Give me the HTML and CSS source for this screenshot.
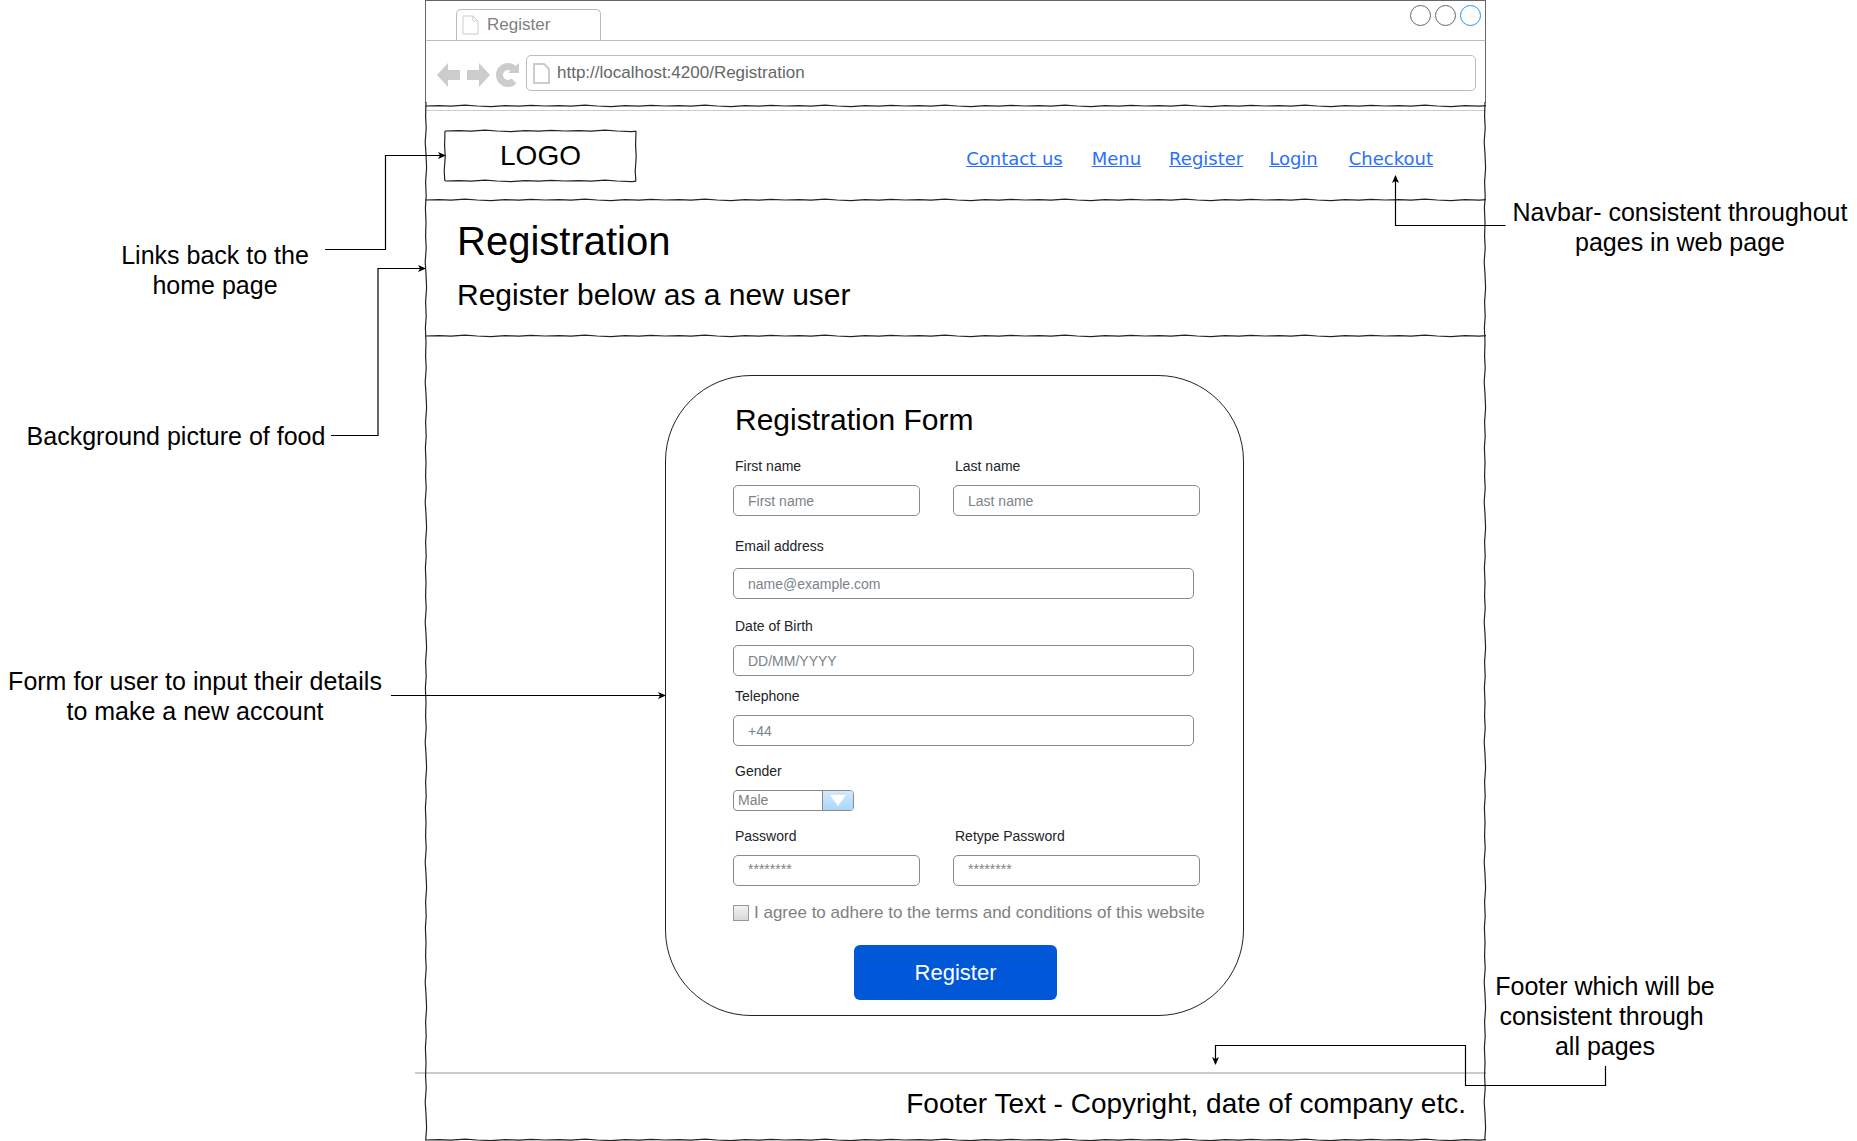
FILE: index.html
```html
<!DOCTYPE html>
<html lang="en">
<head>
    <meta charset="UTF-8">
    <meta name="viewport" content="width=device-width, initial-scale=1.0">
    <title>Registration wireframe</title>
    <link rel="stylesheet" href="styles.css">
</head>
<body>
    <svg class="defs" width="0" height="0">
        <defs>
            <path id="wobble" d="M0 3 L14 2.6 L26 3.2 L40 2.2 L52 3 L66 3.6 L80 2.6 L94 3.2 L106 2.4 L120 3"/>
            <path id="wobble-v" d="M3 0 L2.6 14 L3.2 26 L2.2 40 L3 52 L3.6 66 L2.6 80 L3.2 94 L2.4 106 L3 120"/>
            <pattern id="sketch-h" width="120" height="6" patternUnits="userSpaceOnUse">
                <use href="#wobble" fill="none" stroke="#222" stroke-width="1.2"/>
            </pattern>
            <pattern id="sketch-v" width="6" height="120" patternUnits="userSpaceOnUse">
                <use href="#wobble-v" fill="none" stroke="#222" stroke-width="1.2"/>
            </pattern>
            <marker id="arrow" markerWidth="8" markerHeight="8" refX="7" refY="4" orient="auto" markerUnits="userSpaceOnUse">
                <path d="M0 0.5 L8 4 L0 7.5 L2 4 Z" fill="#000"/>
            </marker>
        </defs>
    </svg>

    <div class="window">
        <!-- browser chrome -->
        <div class="tabbar">
            <div class="tab">
                <svg class="page-icon" width="17" height="20" viewBox="0 0 17 20">
                    <path d="M1 1 H11 L16 6 V19 H1 Z M11 1 V6 H16" fill="none" stroke="#ccc" stroke-width="1"/>
                </svg>
                <span>Register</span>
            </div>
            <div class="controls">
                <span class="dot"></span>
                <span class="dot"></span>
                <span class="dot dot-blue"></span>
            </div>
        </div>
        <div class="addressbar">
            <svg class="nav-icons" width="84" height="26" viewBox="0 0 84 26">
                <path d="M0 13 L11 1 V8 H23 V18 H11 V25 Z" fill="#ccc"/>
                <path d="M53 13 L42 1 V8 H30 V18 H42 V25 Z" fill="#ccc"/>
                <path d="M77 7 A8.5 8.5 0 1 0 77 19" fill="none" stroke="#ccc" stroke-width="7"/>
                <path d="M71 11 L82 11 L82 1 Z" fill="#ccc"/>
            </svg>
            <div class="url">
                <svg class="page-icon" width="17" height="21" viewBox="0 0 17 21">
                    <path d="M1 1 H11 L16 6 V20 H1 Z" fill="none" stroke="#ccc" stroke-width="2"/>
                </svg>
                <span>http://localhost:4200/Registration</span>
            </div>
        </div>

        <svg class="sketch-line" height="6"><rect width="100%" height="6" fill="url(#sketch-h)"/></svg>
        <div class="grey-rule"></div>

        <!-- navbar -->
        <nav class="navbar">
            <div class="logo">
                LOGO
                <svg class="logo-frame" width="191" height="50">
                    <g transform="translate(0 -3)"><rect width="191" height="6" fill="url(#sketch-h)"/></g>
                    <g transform="translate(0 47)"><rect width="191" height="6" fill="url(#sketch-h)"/></g>
                    <g transform="translate(-3 0)"><rect width="6" height="50" fill="url(#sketch-v)"/></g>
                    <g transform="translate(188 0)"><rect width="6" height="50" fill="url(#sketch-v)"/></g>
                </svg>
            </div>
            <ul class="nav-links">
                <li class="link-contact"><a href="#">Contact us</a></li>
                <li class="link-menu"><a href="#">Menu</a></li>
                <li class="link-register"><a href="#">Register</a></li>
                <li class="link-login"><a href="#">Login</a></li>
                <li class="link-checkout"><a href="#">Checkout</a></li>
            </ul>
        </nav>
        <svg class="sketch-line" height="6"><rect width="100%" height="6" fill="url(#sketch-h)"/></svg>

        <header class="page-head">
            <h1>Registration</h1>
            <p>Register below as a new user</p>
        </header>
        <svg class="sketch-line" height="6"><rect width="100%" height="6" fill="url(#sketch-h)"/></svg>

        <!-- form -->
        <main class="content">
            <form class="card">
                <h2>Registration Form</h2>
                <div class="row row-first">
                    <div class="field field-short">
                        <label>First name</label>
                        <input type="text" placeholder="First name">
                    </div>
                    <div class="field field-long">
                        <label>Last name</label>
                        <input type="text" placeholder="Last name">
                    </div>
                </div>
                <div class="field field-full field-email">
                    <label>Email address</label>
                    <input type="text" placeholder="name@example.com">
                </div>
                <div class="field field-full field-dob">
                    <label>Date of Birth</label>
                    <input type="text" placeholder="DD/MM/YYYY">
                </div>
                <div class="field field-full field-tel">
                    <label>Telephone</label>
                    <input type="text" placeholder="+44">
                </div>
                <div class="field field-gender">
                    <label>Gender</label>
                    <div class="select">
                        <span class="select-value">Male</span>
                        <span class="select-btn"><i class="caret"></i></span>
                    </div>
                </div>
                <div class="row row-pass">
                    <div class="field field-short">
                        <label>Password</label>
                        <input class="stars" type="text" placeholder="********">
                    </div>
                    <div class="field field-long">
                        <label>Retype Password</label>
                        <input class="stars" type="text" placeholder="********">
                    </div>
                </div>
                <div class="agree">
                    <span class="checkbox"></span>
                    <span>I agree to adhere to the terms and conditions of this website</span>
                </div>
                <button class="submit" type="button">Register</button>
            </form>
        </main>

        <footer class="footer">Footer Text - Copyright, date of company etc.</footer>
    </div>

    <!-- window sides and annotation connectors -->
    <svg class="overlay" width="1857" height="1141">
        <g transform="translate(423 102)">
            <rect width="6" height="1038" fill="url(#sketch-v)"/>
        </g>
        <g transform="translate(1482 102)">
            <rect width="6" height="1038" fill="url(#sketch-v)"/>
        </g>
        <g transform="translate(425 1137)">
            <rect width="1061" height="4" fill="url(#sketch-h)"/>
        </g>
        <g fill="none" stroke="#000" stroke-width="1.2">
            <path d="M325 249.5 H385.5 V155.5 H445" marker-end="url(#arrow)"/>
            <path d="M331 435.5 H378 V268.5 H425" marker-end="url(#arrow)"/>
            <path d="M391 695.5 H665" marker-end="url(#arrow)"/>
            <path d="M1505.5 225.5 H1395.5 V176" marker-end="url(#arrow)"/>
            <path d="M1605.5 1066 V1085.5 H1465.5 V1045.5 H1215.5 V1064" marker-end="url(#arrow)"/>
        </g>
    </svg>

    <div class="note note-links">Links back to the<br>home page</div>
    <div class="note note-bg">Background picture of food</div>
    <div class="note note-form">Form for user to input their details<br>to make a new account</div>
    <div class="note note-nav">Navbar- consistent throughout<br>pages in web page</div>
    <div class="note note-footer">Footer which will be<br>consistent through&nbsp;<br>all pages</div>
</body>
</html>
```

FILE: styles.css
```css
/* page */
html, body {
    margin: 0;
    padding: 0;
    background: #fff;
    overflow: hidden;
}

body {
    position: relative;
    width: 1857px;
    height: 1141px;
    font-family: "Liberation Sans", Arial, sans-serif;
    color: #000;
}

.defs {
    position: absolute;
}

.window {
    box-sizing: border-box;
    width: 1061px;
    height: 1141px;
    margin-left: 425px;
    display: flex;
    flex-direction: column;
    border-top: 1px solid #666;
}

.sketch-line {
    display: block;
    width: 100%;
    flex: none;
}

/* browser chrome */
.tabbar {
    display: flex;
    justify-content: space-between;
    height: 40px;
    flex: none;
    box-sizing: border-box;
    padding-left: 30px;
    border-bottom: 1px solid #bbb;
    border-left: 1px solid #666;
    border-right: 1px solid #666;
}

.tab {
    box-sizing: border-box;
    width: 145px;
    height: 31px;
    margin-top: 8px;
    display: flex;
    align-items: center;
    gap: 8px;
    padding: 0 0 0 5px;
    border: 1px solid #bbb;
    border-bottom: none;
    border-radius: 5px 5px 0 0;
    font-size: 17px;
    color: #808080;
}

.controls {
    display: flex;
    gap: 4px;
    padding: 4px 4px 0 0;
}

.dot {
    box-sizing: border-box;
    width: 21px;
    height: 21px;
    border: 1px solid #666;
    border-radius: 50%;
}

.dot-blue {
    border-color: #2196f3;
}

.addressbar {
    box-sizing: border-box;
    height: 62px;
    flex: none;
    display: flex;
    align-items: flex-start;
    padding: 14px 9px 0 11px;
    border-left: 1px solid #666;
    border-right: 1px solid #666;
}

.nav-icons {
    margin: 7px 5px 0 0;
    flex: none;
}

.url {
    flex: 1;
    box-sizing: border-box;
    height: 36px;
    display: flex;
    align-items: center;
    gap: 7px;
    padding-left: 6px;
    border: 1px solid #bbb;
    border-radius: 5px;
    font-size: 17px;
    color: #666;
}

.grey-rule {
    height: 1px;
    flex: none;
    margin-top: 1px;
    background: #ccc;
}

/* navbar */
.navbar {
    box-sizing: border-box;
    height: 86px;
    flex: none;
    display: flex;
    justify-content: space-between;
    padding: 20px 0 0 20px;
}

.logo {
    position: relative;
    box-sizing: border-box;
    width: 191px;
    height: 50px;
    text-align: center;
    font-size: 28px;
    line-height: 50px;
}

.logo-frame {
    position: absolute;
    left: 0;
    top: 0;
    overflow: visible;
}

.nav-links {
    list-style: none;
    margin: 0;
    padding: 0;
    display: flex;
    font-family: "DejaVu Sans", Verdana, sans-serif;
    font-size: 18px;
    line-height: 22px;
    padding-top: 17px;
}

.nav-links a {
    color: #2a6fff;
}

.nav-links li {
    margin-right: 29px;
}

.nav-links .link-menu {
    margin-right: 28px;
}

.nav-links .link-register {
    margin-right: 26px;
}

.nav-links .link-login {
    margin-right: 31px;
}

.nav-links .link-checkout {
    margin-right: 53px;
}

/* page heading */
.page-head {
    box-sizing: border-box;
    height: 130px;
    flex: none;
    padding: 15px 0 0 32px;
}

.page-head h1 {
    margin: 0;
    font-size: 40px;
    font-weight: normal;
    line-height: 46px;
}

.page-head p {
    margin: 13px 0 0;
    font-size: 30px;
    line-height: 36px;
}

/* form card */
.content {
    flex: 1;
    padding: 36px 0 0 240px;
}

.card {
    box-sizing: border-box;
    width: 579px;
    height: 641px;
    padding: 25px 0 0 67px;
    border: 1px solid #222;
    border-radius: 86px;
}

.card h2 {
    margin: 0 0 0 2px;
    font-size: 30px;
    font-weight: normal;
    line-height: 38px;
}

.row {
    display: flex;
    gap: 33px;
}

.field label {
    display: block;
    margin-left: 2px;
    font-size: 14px;
    line-height: 18px;
    color: #212529;
}

.field input {
    display: block;
    box-sizing: border-box;
    width: 100%;
    height: 31px;
    padding: 0 14px;
    border: 1px solid #8a8a8a;
    border-radius: 5px;
    outline: none;
    font-family: inherit;
    font-size: 14px;
}

.field input::placeholder {
    color: #7b838a;
    opacity: 1;
}

.field .stars {
    padding-bottom: 3px;
}

.field-short {
    width: 187px;
}

.field-long {
    width: 247px;
}

.field-full {
    width: 461px;
}

.row-first {
    margin-top: 18px;
}

.row-first label,
.row-pass label {
    margin-bottom: 10px;
}

.field-email {
    margin-top: 21px;
}

.field-email label {
    margin-bottom: 13px;
}

.field-dob {
    margin-top: 18px;
}

.field-dob label {
    margin-bottom: 10px;
}

.field-tel {
    margin-top: 11px;
}

.field-tel label {
    margin-bottom: 10px;
}

.field-gender {
    margin-top: 16px;
}

.field-gender label {
    margin-bottom: 10px;
}

.select {
    box-sizing: border-box;
    width: 121px;
    height: 21px;
    display: flex;
    border: 1px solid #8a8a8a;
    border-radius: 4px;
    overflow: hidden;
}

.select-value {
    flex: 1;
    padding-left: 4px;
    font-size: 14px;
    line-height: 19px;
    color: #808080;
}

.select-btn {
    width: 30px;
    display: flex;
    align-items: center;
    justify-content: center;
    border-left: 1px solid #8a8a8a;
    background: linear-gradient(#d4e9fb, #a8d7fd);
}

.caret {
    width: 0;
    height: 0;
    border-left: 8px solid transparent;
    border-right: 8px solid transparent;
    border-top: 11px solid #fff;
}

.row-pass {
    margin-top: 16px;
}

.agree {
    display: flex;
    align-items: center;
    gap: 5px;
    margin-top: 18px;
    font-size: 17px;
    line-height: 18px;
    color: #808080;
    white-space: nowrap;
}

.checkbox {
    box-sizing: border-box;
    width: 16px;
    height: 16px;
    border: 1px solid #999;
    background: linear-gradient(#f2f2f2, #d8d8d8);
}

.submit {
    display: block;
    width: 203px;
    height: 55px;
    margin: 23px 0 0 121px;
    border: none;
    border-radius: 6px;
    background: #0057d8;
    color: #fff;
    font-family: inherit;
    font-size: 22px;
}

/* footer */
.footer {
    flex: none;
    box-sizing: border-box;
    height: 69px;
    margin-left: -10px;
    padding: 12px 20px 0 0;
    border-top: 2px solid #ccc;
    text-align: right;
    font-size: 28px;
    line-height: 36px;
}

/* annotations on the canvas */
.overlay {
    position: absolute;
    left: 0;
    top: 0;
    pointer-events: none;
}

.note {
    position: absolute;
    font-size: 25px;
    line-height: 30px;
    text-align: center;
    white-space: nowrap;
    transform: translateX(-50%);
}

.note-links {
    left: 215px;
    top: 240px;
}

.note-bg {
    left: 176px;
    top: 421px;
}

.note-form {
    left: 195px;
    top: 666px;
}

.note-nav {
    left: 1680px;
    top: 197px;
}

.note-footer {
    left: 1605px;
    top: 971px;
}
```
